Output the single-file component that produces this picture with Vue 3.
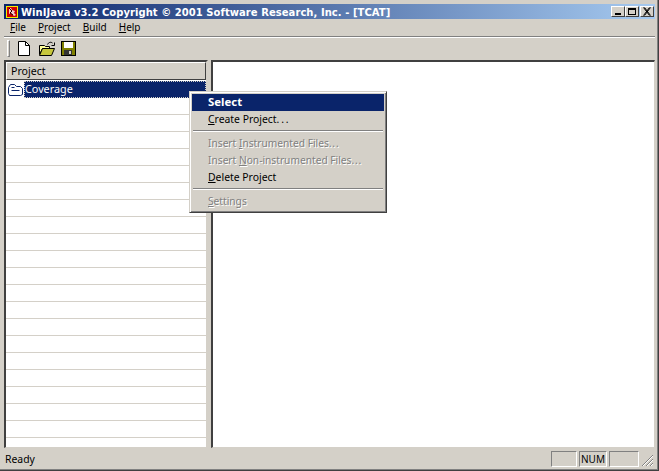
<script setup>
const rows = Array.from({ length: 21 }, (_, i) => i)
const menus = [
  { u: 'F', r: 'ile' },
  { u: 'P', r: 'roject' },
  { u: 'B', r: 'uild' },
  { u: 'H', r: 'elp' }
]
</script>

<template>
  <div class="window">
    <div class="titlebar">
      <svg class="appicon" width="12" height="12" viewBox="0 0 12 12">
        <rect x="0.5" y="0.5" width="11" height="11" fill="#d00000" stroke="#f0f000" />
        <path d="M3 2h2l1 2 3 1-1 2 2 2-2 1-3-3-2 1z" fill="#fff" opacity=".8" />
        <path d="M3 2l3 3-2 2 3 2" fill="none" stroke="#300000" />
      </svg>
      <span class="title">WinIJava v3.2 Copyright © 2001 Software Research, Inc. - [TCAT]</span>
      <div class="capbtns">
        <div class="capbtn"><svg width="12" height="9" viewBox="0 0 12 9"><rect x="3" y="6" width="6" height="2" fill="#000" /></svg></div>
        <div class="capbtn"><svg width="12" height="9" viewBox="0 0 12 9"><rect x="2.5" y="1.500" width="7" height="6" fill="none" stroke="#000" /><rect x="2" y="1" width="8" height="2" fill="#000" /></svg></div>
        <div class="capbtn close"><svg width="12" height="9" viewBox="0 0 12 9"><path d="M2.500 0.500l6 8M8.500 0.500l-6 8M3.500 0.500l6 8M9.500 0.500l-6 8" fill="none" stroke="#000" /></svg></div>
      </div>
    </div>
    <div class="menubar">
      <span v-for="m in menus" :key="m.u" class="menu"><u>{{ m.u }}</u>{{ m.r }}</span>
    </div>
    <div class="toolbar">
      <div class="grip"></div>
      <svg class="tool" width="14" height="15" viewBox="0 0 14 15">
        <path d="M1.500 0.500h7l4 4v10h-11z" fill="#fff" stroke="#000" />
        <path d="M8.500 0.500v4h4" fill="none" stroke="#000" />
      </svg>
      <svg class="tool open" width="16" height="15" viewBox="0 0 16 15">
        <path d="M0.500 4.500h5l1 1h4v2h-7l-3 6z" fill="#ffff99" stroke="#000" />
        <path d="M0.500 14.500l3-7h12l-3 7z" fill="#c6c63c" stroke="#000" />
        <path d="M8.500 3.500c1-2 3-3 5-1.500M15.500 1.500v3h-3" fill="none" stroke="#000" />
      </svg>
      <svg class="tool save" width="15" height="15" viewBox="0 0 15 15">
        <rect x="0.500" y="0.500" width="14" height="14" fill="#808000" stroke="#000" />
        <rect x="3" y="1" width="9" height="6" fill="#fff" />
        <rect x="3" y="9" width="8" height="5" fill="#333" />
        <rect x="8" y="10" width="2" height="3" fill="#d4d0c8" />
      </svg>
    </div>
    <div class="panes">
      <div class="left">
        <div class="header">Project</div>
        <div class="list">
          <div class="row selected">
            <svg class="folder" width="17" height="14" viewBox="0 0 17 14">
              <path d="M1.500 4.500l2-3h4l2 2h4l2 2v6l-2 1h-11l-1-2z" fill="#fff" stroke="#0a246a" />
              <path d="M4.500 7.500h8M4.500 4.500h3" fill="none" stroke="#0a246a" />
            </svg>
            <span class="rowtext">Coverage</span>
          </div>
          <div v-for="r in rows" :key="r" class="row"></div>
        </div>
      </div>
      <div class="right"></div>
    </div>
    <div class="statusbar">
      <span class="ready">Ready</span>
      <div class="cell c1"></div>
      <div class="cell c2">NUM</div>
      <div class="cell c3"></div>
      <svg class="resize" width="13" height="13" viewBox="0 0 13 13">
        <path d="M12 1L1 12M12 5L5 12M12 9L9 12" stroke="#808080" fill="none" />
        <path d="M12 2L2 12M12 6L6 12M12 10L10 12" stroke="#fff" fill="none" />
      </svg>
    </div>

    <div class="ctx">
      <div class="item active">Select</div>
      <div class="item"><u>C</u>reate Project<span class="dots">...</span></div>
      <div class="sep"></div>
      <div class="item off">Insert <u>I</u>nstrumented Files<span class="dots tight">...</span></div>
      <div class="item off">Insert <u>N</u>on-instrumented Files<span class="dots tight">...</span></div>
      <div class="item"><u>D</u>elete Project</div>
      <div class="sep"></div>
      <div class="item off"><u>S</u>ettings</div>
    </div>
  </div>
</template>

<style>
html, body { margin: 0; background: #d4d0c8; }
</style>

<style scoped>
.window {
  position: relative;
  box-sizing: border-box;
  width: 659px;
  height: 471px;
  overflow: hidden;
  background: #d4d0c8;
  padding: 4px 3px 1px 4px;
  display: flex;
  flex-direction: column;
  border-right: 1px solid #404040;
  border-bottom: 1px solid #404040;
  box-shadow: inset -1px -1px 0 #808080;
  font-family: "Noto Sans", "Liberation Sans", sans-serif;
  font-size: 10.4px;
  color: #000;
}
.titlebar {
  height: 15px;
  flex: none;
  display: flex;
  align-items: center;
  background: linear-gradient(90deg, #0a246a, #a6caf0);
  padding: 0 1px 0 2px;
}
.appicon { flex: none; margin-right: 3px; }
.title {
  color: #fff;
  font-family: "DejaVu Sans", sans-serif;
  font-weight: 700;
  font-size: 10px;
  letter-spacing: 0.05px;
  white-space: nowrap;
  flex: 1;
  padding-top: 1px;
}
.capbtns { display: flex; }
.capbtn {
  width: 14px;
  height: 11px;
  box-sizing: border-box;
  background: #d4d0c8;
  border: 1px solid;
  border-color: #fff #404040 #404040 #fff;
  display: flex;
  align-items: center;
  justify-content: center;
}
.capbtn.close { margin-left: 1px; }
.menubar {
  height: 18px;
  flex: none;
  box-sizing: border-box;
  display: flex;
  align-items: center;
  padding-left: 6px;
  padding-bottom: 2px;
  gap: 12px;
  border-bottom: 1px solid #808080;
  box-shadow: 0 1px 0 #fff;
  font-size: 10px;
}
.menu { white-space: nowrap; }
.toolbar {
  height: 23px;
  flex: none;
  display: flex;
  align-items: center;
  box-sizing: border-box;
  padding-bottom: 1px;
}
.grip {
  width: 3px;
  height: 17px;
  margin-left: 3px;
  box-sizing: border-box;
  border: 1px solid;
  border-color: #fff #808080 #808080 #fff;
}
.tool { flex: none; margin-left: 7px; }
.open { margin-left: 8px; }
.save { margin-left: 6px; }
.panes {
  flex: 1;
  min-height: 0;
  display: flex;
  gap: 3px;
}
.left {
  width: 204px;
  flex: none;
  box-sizing: border-box;
  border: 2px solid;
  border-color: #404040 #d4d0c8 #d4d0c8 #404040;
  border-bottom-width: 1px;
  box-shadow: inset -1px 0 0 #fff;
  background: #fff;
  overflow: hidden;
  display: flex;
  flex-direction: column;
}
.header {
  height: 18px;
  flex: none;
  box-sizing: border-box;
  background: #d4d0c8;
  border: 1px solid;
  border-color: #fff #404040 #404040 #fff;
  padding-left: 4px;
  line-height: 16px;
  font-size: 10.6px;
}
.list { flex: 1; overflow: hidden; }
.row {
  height: 17px;
  box-sizing: border-box;
  border-bottom: 1px solid #d4d0c8;
}
.row.selected {
  display: flex;
  align-items: center;
  border-bottom: none;
  padding-left: 1px;
  height: 17px;
  margin-top: 1px;
}
.folder { flex: none; }
.rowtext {
  flex: 1;
  align-self: stretch;
  background: #0a246a;
  color: #fff;
  line-height: 16px;
  padding-left: 1px;
  font-size: 10.8px;
  outline: 1px dotted #d4d0c8;
  outline-offset: -1px;
}
.right {
  flex: 1;
  box-sizing: border-box;
  border: 2px solid;
  border-color: #404040 #d4d0c8 #d4d0c8 #404040;
  border-width: 2px 1px 1px 2px;
  background: #fff;
}
.statusbar {
  height: 20px;
  flex: none;
  display: flex;
  align-items: center;
  position: relative;
  margin-top: 1px;
  padding-bottom: 1px;
  box-sizing: border-box;
}
.ready { flex: 1; padding-left: 1px; }
.cell {
  box-sizing: border-box;
  height: 16px;
  border: 1px solid;
  border-color: #808080 #fff #fff #808080;
  line-height: 14px;
  margin-right: 2px;
  text-align: center;
  font-size: 10px;
}
.c1 { width: 26px; }
.c2 { width: 28px; }
.c3 { width: 30px; margin-right: 16px; }
.resize { position: absolute; right: 1px; bottom: 2px; }
.ctx {
  position: absolute;
  left: 189px;
  top: 91px;
  width: 198px;
  box-sizing: border-box;
  background: #d4d0c8;
  padding: 2px;
  border: 1px solid;
  border-color: #d4d0c8 #404040 #404040 #d4d0c8;
  box-shadow: inset 1px 1px 0 #fff, inset -1px -1px 0 #808080;
}
.item {
  height: 17px;
  line-height: 16px;
  padding-left: 16px;
  white-space: nowrap;
}
.dots { letter-spacing: 1.800px; }
.dots.tight { letter-spacing: 0.800px; }
.item.active {
  background: #0a246a;
  color: #fff;
  font-weight: 700;
  font-size: 11.4px;
}
.item.off {
  color: #808080;
  text-shadow: 1px 1px 0 #fff;
  font-size: 10.2px;
}
.sep {
  height: 2px;
  margin: 2px 1px 3px;
  background: #808080;
  border-bottom: 1px solid #fff;
  box-sizing: border-box;
}
</style>
